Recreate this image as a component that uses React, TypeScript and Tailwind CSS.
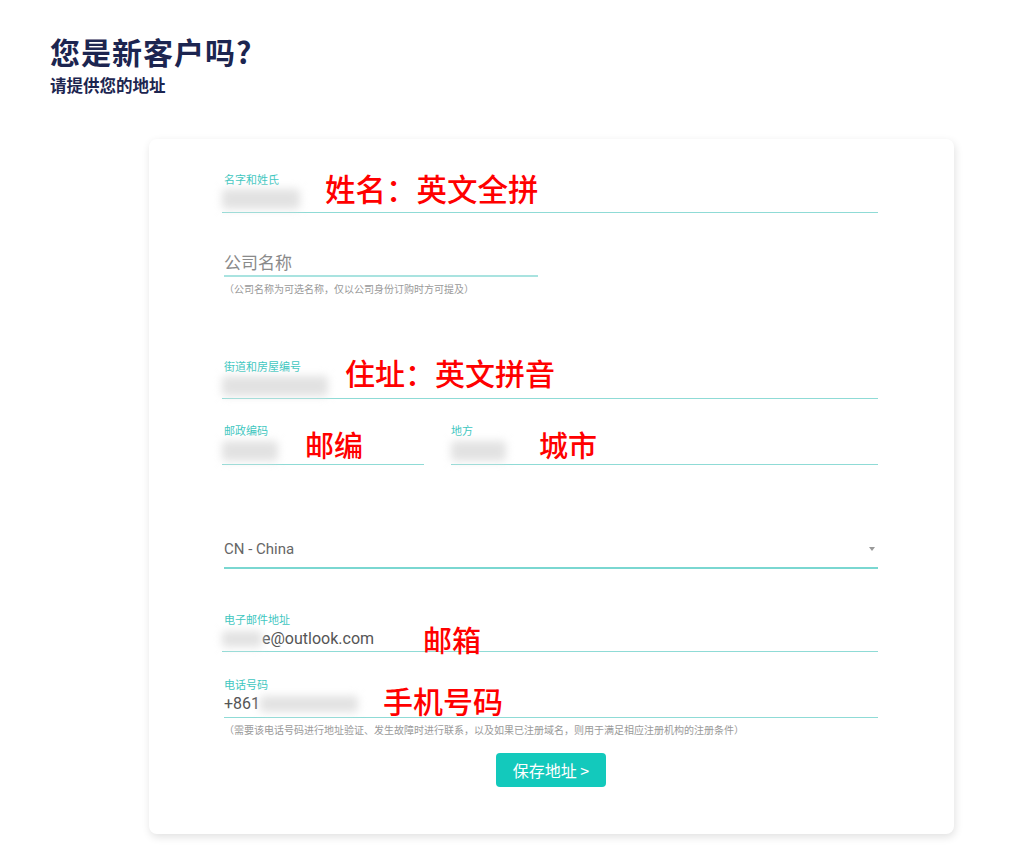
const cjk = { fontFamily: '"Noto Sans CJK SC", "Noto Sans", sans-serif' };
const latin = { fontFamily: 'Roboto, "Noto Sans CJK SC", sans-serif' };

function Blur({ w, h = 20 }: { w: number; h?: number }) {
  return (
    <div
      className="rounded-sm bg-[#e2e2e2] blur-[4px]"
      style={{ width: w, height: h }}
    />
  );
}

function Note({ text, left, top, size = 30 }: { text: string; left: number; top: number; size?: number }) {
  return (
    <span
      className="absolute whitespace-nowrap leading-none font-medium text-[#ff0000]"
      style={{ left, top, fontSize: size }}
    >
      {text}
    </span>
  );
}

function Label({ children }: { children: string }) {
  return <div className="h-[14px] text-[11px] leading-[14px] text-[#3fc7bf]">{children}</div>;
}

export default function App() {
  return (
    <div className="min-h-[866px] bg-white px-[50px] pt-[30px] text-[#333]" style={cjk}>
      <h1 className="h-[43px] text-[30px] leading-[43px] font-bold tracking-[1px] text-[#1c2550]">您是新客户吗?</h1>
      <p className="mt-[1px] h-[23px] text-[16.5px] leading-[23px] font-bold text-[#1c2550]">请提供您的地址</p>

      <div className="mt-[42px] ml-[99px] w-[805px] rounded-lg bg-white pt-[33px] pr-[76px] pb-[47px] pl-[75px] shadow-[1px_3px_8px_rgba(0,0,0,0.12)]">
        {/* name */}
        <div className="relative">
          <Label>名字和姓氏</Label>
          <div className="flex h-[27px] items-center border-b border-[#8fdbd6] -ml-[2px]">
            <Blur w={78} />
          </div>
          <Note text="姓名：英文全拼" left={101} top={1} size={30.5} />
        </div>

        {/* company */}
        <div className="mt-[37px] w-[314px]">
          <div className="h-[27px] border-b-2 border-[#a9e3e0] text-[17px] leading-[24px] text-[#8a8a8a]">公司名称</div>
        </div>
        <div className="mt-[5px] h-[14px] text-[10px] leading-[14px] text-[#9a9a9a]">（公司名称为可选名称，仅以公司身份订购时方可提及）</div>

        {/* street */}
        <div className="relative mt-[63px]">
          <Label>街道和房屋编号</Label>
          <div className="flex h-[26px] items-center border-b border-[#8fdbd6] -ml-[2px]">
            <Blur w={106} />
          </div>
          <Note text="住址：英文拼音" left={121} top={-2} size={30} />
        </div>

        {/* postal + city */}
        <div className="mt-[24px] flex gap-[27px]">
          <div className="relative w-[200px]">
            <Label>邮政编码</Label>
            <div className="flex h-[28px] items-center border-b border-[#8fdbd6] -ml-[2px]">
              <Blur w={56} />
            </div>
            <Note text="邮编" left={81} top={7} size={29} />
          </div>
          <div className="relative flex-1">
            <Label>地方</Label>
            <div className="flex h-[28px] items-center border-b border-[#8fdbd6]">
              <Blur w={55} />
            </div>
            <Note text="城市" left={88} top={7} size={29} />
          </div>
        </div>

        {/* country */}
        <div className="mt-[72px] flex h-[32px] items-center justify-between border-b-2 border-[#7ad7d1] pb-[6px]">
          <span className="text-[15px] leading-[20px] text-[#666]" style={latin}>CN - China</span>
          <span className="mr-[3px] h-0 w-0 border-x-[3px] border-t-[4px] border-x-transparent border-t-[#999]" />
        </div>

        {/* email */}
        <div className="relative mt-[43px]">
          <Label>电子邮件地址</Label>
          <div className="flex h-[26px] items-center border-b border-[#8fdbd6] -ml-[2px]">
            <Blur w={40} h={16} />
            <span className="text-[16px] text-[#555]" style={latin}>e@outlook.com</span>
          </div>
          <Note text="邮箱" left={199} top={13} size={29} />
        </div>

        {/* phone */}
        <div className="relative mt-[25px]">
          <Label>电话号码</Label>
          <div className="flex h-[27px] items-center border-b border-[#8fdbd6]">
            <span className="text-[16px] text-[#555]" style={latin}>+861</span>
            <Blur w={98} h={16} />
          </div>
          <Note text="手机号码" left={159} top={8} size={30} />
        </div>
        <div className="mt-[5px] h-[14px] text-[10px] leading-[14px] text-[#9a9a9a]">（需要该电话号码进行地址验证、发生故障时进行联系，以及如果已注册域名，则用于满足相应注册机构的注册条件）</div>

        {/* button */}
        <div className="mt-[16px] flex justify-center">
          <button className="h-[34px] w-[110px] rounded-sm bg-[#13c9bc] text-[16px] text-white">保存地址 &gt;</button>
        </div>
      </div>
    </div>
  );
}
